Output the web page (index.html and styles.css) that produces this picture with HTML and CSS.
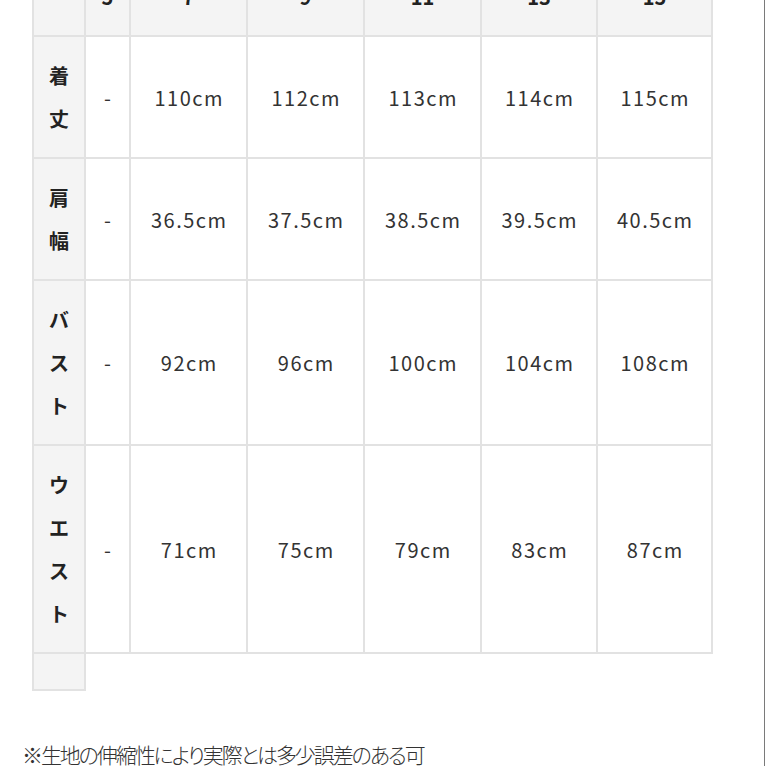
FILE: index.html
```html
<!DOCTYPE html>
<html lang="ja">
<head>
<meta charset="utf-8">
<link rel="stylesheet" href="styles.css">
</head>
<body>
<div class="page">
  <table class="size-table">
    <colgroup>
      <col class="c-label"><col class="c-dash"><col class="c-val"><col class="c-val"><col class="c-val"><col class="c-val4"><col class="c-val5">
    </colgroup>
    <thead>
      <tr class="head-row">
        <th class="label"></th><th>5</th><th>7</th><th>9</th><th>11</th><th>13</th><th>15</th>
      </tr>
    </thead>
    <tbody>
      <tr>
        <th class="label">着丈</th><td>-</td><td>110cm</td><td>112cm</td><td>113cm</td><td>114cm</td><td>115cm</td>
      </tr>
      <tr>
        <th class="label">肩幅</th><td>-</td><td>36.5cm</td><td>37.5cm</td><td>38.5cm</td><td>39.5cm</td><td>40.5cm</td>
      </tr>
      <tr>
        <th class="label">バスト</th><td>-</td><td>92cm</td><td>96cm</td><td>100cm</td><td>104cm</td><td>108cm</td>
      </tr>
      <tr>
        <th class="label">ウエスト</th><td>-</td><td>71cm</td><td>75cm</td><td>79cm</td><td>83cm</td><td>87cm</td>
      </tr>
      <tr class="tail-row">
        <th class="label empty"></th>
      </tr>
    </tbody>
  </table>
  <p class="note">※生地の伸縮性により実際とは多少誤差のある可</p>
</div>
</body>
</html>
```

FILE: styles.css
```css
html, body {
  margin: 0;
  padding: 0;
  background: #ffffff;
  overflow: hidden;
}

.page {
  width: 765px;
  height: 766px;
  border-right: 1px solid #7a7a7a;
  padding-left: 22px;
  box-sizing: border-box;
  overflow: hidden;
  font-family: "Noto Sans CJK JP", "Noto Sans", sans-serif;
  color: #333333;
}

.size-table {
  margin-top: -44px;
  margin-left: 10px;
  border-collapse: collapse;
  table-layout: fixed;
  width: 680px;
}

.c-label { width: 52px; }
.c-dash { width: 45px; }
.c-val { width: 117px; }
.c-val4 { width: 116px; }
.c-val5 { width: 115px; }

.size-table th,
.size-table td {
  border: 2px solid #e2e2e2;
  padding: 17px 0;
  line-height: 43px;
  text-align: center;
  vertical-align: middle;
  font-size: 20px;
  font-weight: 400;
  color: #333333;
}

.size-table td {
  letter-spacing: 1.5px;
  text-indent: 1.5px;
}

.head-row th {
  background: #f4f4f4;
  font-weight: 700;
  color: #222222;
}

.size-table th.label {
  background: #f4f4f4;
  font-weight: 700;
  color: #222222;
  word-break: break-all;
  padding-left: 15px;
  padding-right: 15px;
}

.tail-row th.empty {
  height: 35px;
  padding: 0;
  line-height: 0;
}

.note {
  margin: 48px 0 0 0;
  font-size: 21px;
  line-height: 30px;
  font-weight: 300;
  font-feature-settings: "palt";
  letter-spacing: -2.1px;
  color: #333333;
  white-space: nowrap;
}
```
